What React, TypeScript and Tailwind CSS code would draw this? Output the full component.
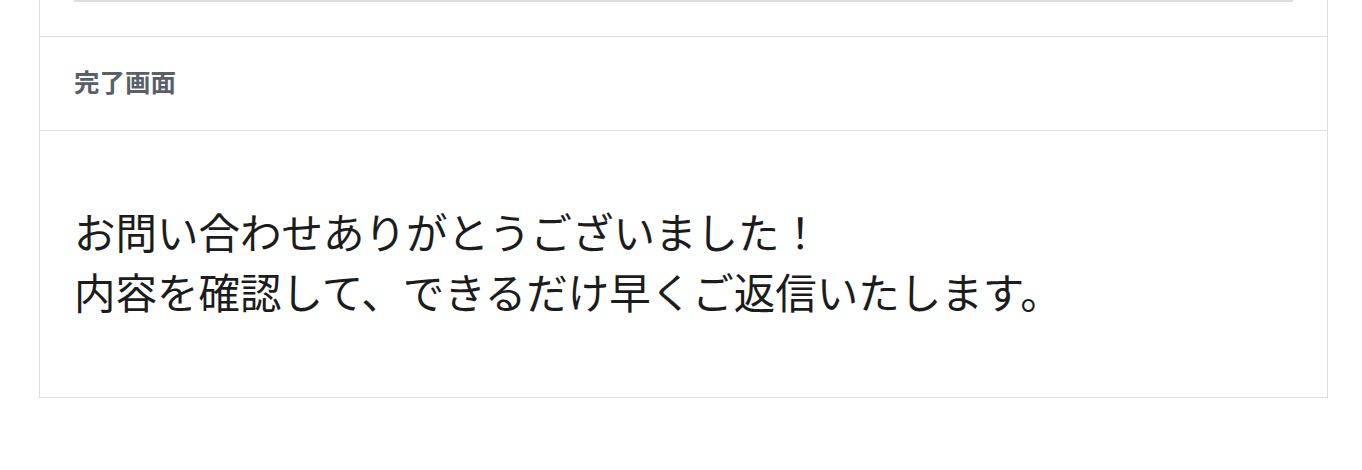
export default function App() {
  return (
    <div className="min-h-screen bg-white font-['Noto_Sans_CJK_JP','Noto_Sans',sans-serif]">
      <div className="ml-[39px] mr-[34px] -mt-[39px] border border-t-0 border-[#dddddd]">
        {/* previous step, scrolled off the top */}
        <section className="px-[34px] pt-0 pb-[34px] border-b border-[#dddddd]">
          <div className="grid grid-cols-[587px_1fr] border-2 border-t-0 border-[#dddddd]">
            <div className="h-[39px] border-r-2 border-[#dddddd]" />
            <div className="h-[39px]" />
          </div>
        </section>

        <section className="px-[34px] pt-[25px] pb-[30px] border-b border-[#dddddd]">
          <h3 className="text-[25.5px] leading-[38px] font-bold text-[#596068]">完了画面</h3>
        </section>

        <section className="px-[34px] pt-[70px] pb-[76px]">
          <p className="text-[41.5px] leading-[60px] text-[#1c1c1c]">
            お問い合わせありがとうございました！
            <br />
            内容を確認して、できるだけ早くご返信いたします。
          </p>
        </section>
      </div>
    </div>
  );
}
